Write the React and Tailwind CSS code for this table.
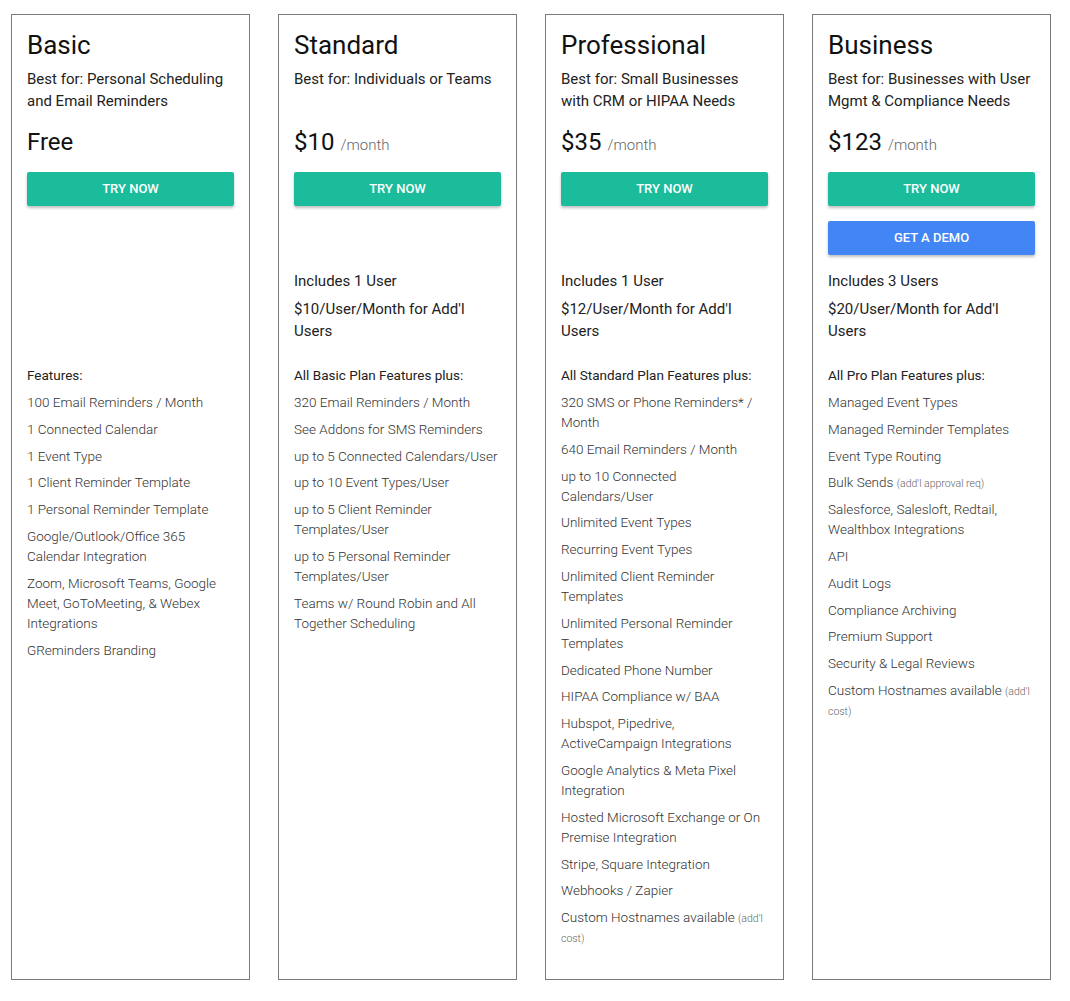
const plans = [
  {
    name: "Basic",
    bestFor: "Best for: Personal Scheduling and Email Reminders",
    price: "Free",
    perMonth: false,
    demo: false,
    includes: null,
    heading: "Features:",
    features: [
      "100 Email Reminders / Month",
      "1 Connected Calendar",
      "1 Event Type",
      "1 Client Reminder Template",
      "1 Personal Reminder Template",
      "Google/Outlook/Office 365 Calendar Integration",
      "Zoom, Microsoft Teams, Google Meet, GoToMeeting, & Webex Integrations",
      "GReminders Branding",
    ],
  },
  {
    name: "Standard",
    bestFor: "Best for: Individuals or Teams",
    price: "$10",
    perMonth: true,
    demo: false,
    includes: ["Includes 1 User", "$10/User/Month for Add'l Users"],
    heading: "All Basic Plan Features plus:",
    features: [
      "320 Email Reminders / Month",
      "See Addons for SMS Reminders",
      "up to 5 Connected Calendars/User",
      "up to 10 Event Types/User",
      "up to 5 Client Reminder Templates/User",
      "up to 5 Personal Reminder Templates/User",
      "Teams w/ Round Robin and All Together Scheduling",
    ],
  },
  {
    name: "Professional",
    bestFor: "Best for: Small Businesses with CRM or HIPAA Needs",
    price: "$35",
    perMonth: true,
    demo: false,
    includes: ["Includes 1 User", "$12/User/Month for Add'l Users"],
    heading: "All Standard Plan Features plus:",
    features: [
      "320 SMS or Phone Reminders* / Month",
      "640 Email Reminders / Month",
      "up to 10 Connected Calendars/User",
      "Unlimited Event Types",
      "Recurring Event Types",
      "Unlimited Client Reminder Templates",
      "Unlimited Personal Reminder Templates",
      "Dedicated Phone Number",
      "HIPAA Compliance w/ BAA",
      "Hubspot, Pipedrive, ActiveCampaign Integrations",
      "Google Analytics & Meta Pixel Integration",
      "Hosted Microsoft Exchange or On Premise Integration",
      "Stripe, Square Integration",
      "Webhooks / Zapier",
      ["Custom Hostnames available", "(add'l cost)"],
    ],
  },
  {
    name: "Business",
    bestFor: "Best for: Businesses with User Mgmt & Compliance Needs",
    price: "$123",
    perMonth: true,
    demo: true,
    includes: ["Includes 3 Users", "$20/User/Month for Add'l Users"],
    heading: "All Pro Plan Features plus:",
    features: [
      "Managed Event Types",
      "Managed Reminder Templates",
      "Event Type Routing",
      ["Bulk Sends", "(add'l approval req)"],
      "Salesforce, Salesloft, Redtail, Wealthbox Integrations",
      "API",
      "Audit Logs",
      "Compliance Archiving",
      "Premium Support",
      "Security & Legal Reviews",
      ["Custom Hostnames available", "(add'l cost)"],
    ],
  },
];

function Feature({ item }) {
  if (Array.isArray(item)) {
    return (
      <li>
        {item[0]} <span className="text-[10.5px] leading-none text-[#666]">{item[1]}</span>
      </li>
    );
  }
  return <li>{item}</li>;
}

const btnCls =
  "flex h-[34px] w-full items-center justify-center rounded-[2px] text-[13px] font-medium text-white shadow-[0_2px_3px_rgba(0,0,0,0.25)]";

function PlanCard({ plan }) {
  return (
    <div className="border border-[#7a7a7a] bg-white px-[15px] pt-[13px] pb-[32px]">
      <h2 className="text-[26px] leading-[34px] text-[#111]">{plan.name}</h2>
      <p className="mt-[6px] min-h-[44px] text-[15px] leading-[22px] text-[#222]">{plan.bestFor}</p>

      <div className="mt-[15px] flex h-[30px] items-baseline gap-[6px] leading-[30px]">
        <span className="text-[24px] text-[#111]">{plan.price}</span>
        {plan.perMonth && <span className="text-[15px] font-light text-[#666]">/month</span>}
      </div>

      <button className={`mt-[15px] bg-[#1abc9c] ${btnCls}`}>TRY NOW</button>
      {plan.demo ? (
        <button className={`mt-[15px] bg-[#4285f4] ${btnCls}`}>GET A DEMO</button>
      ) : (
        <div className="mt-[15px] h-[34px]" />
      )}

      <div className="mt-[15px] h-[72px] space-y-[6px] text-[15px] leading-[22px] text-[#222]">
        {plan.includes && plan.includes.map((line) => <p key={line}>{line}</p>)}
      </div>

      <p className="mt-[23px] text-[13.5px] leading-[20px] text-[#222]">{plan.heading}</p>
      <ul className="mt-[7px] space-y-[6.8px] text-[13.5px] font-light leading-[20px] text-[#333]">
        {plan.features.map((f, i) => (
          <Feature key={i} item={f} />
        ))}
      </ul>
    </div>
  );
}

export default function App() {
  return (
    <div className="min-h-screen bg-white px-[11px] pt-[14px] font-['Roboto',sans-serif]">
      <div className="grid w-[1040px] grid-cols-[repeat(4,239px)] gap-[28px]">
        {plans.map((p) => (
          <PlanCard key={p.name} plan={p} />
        ))}
      </div>
    </div>
  );
}
